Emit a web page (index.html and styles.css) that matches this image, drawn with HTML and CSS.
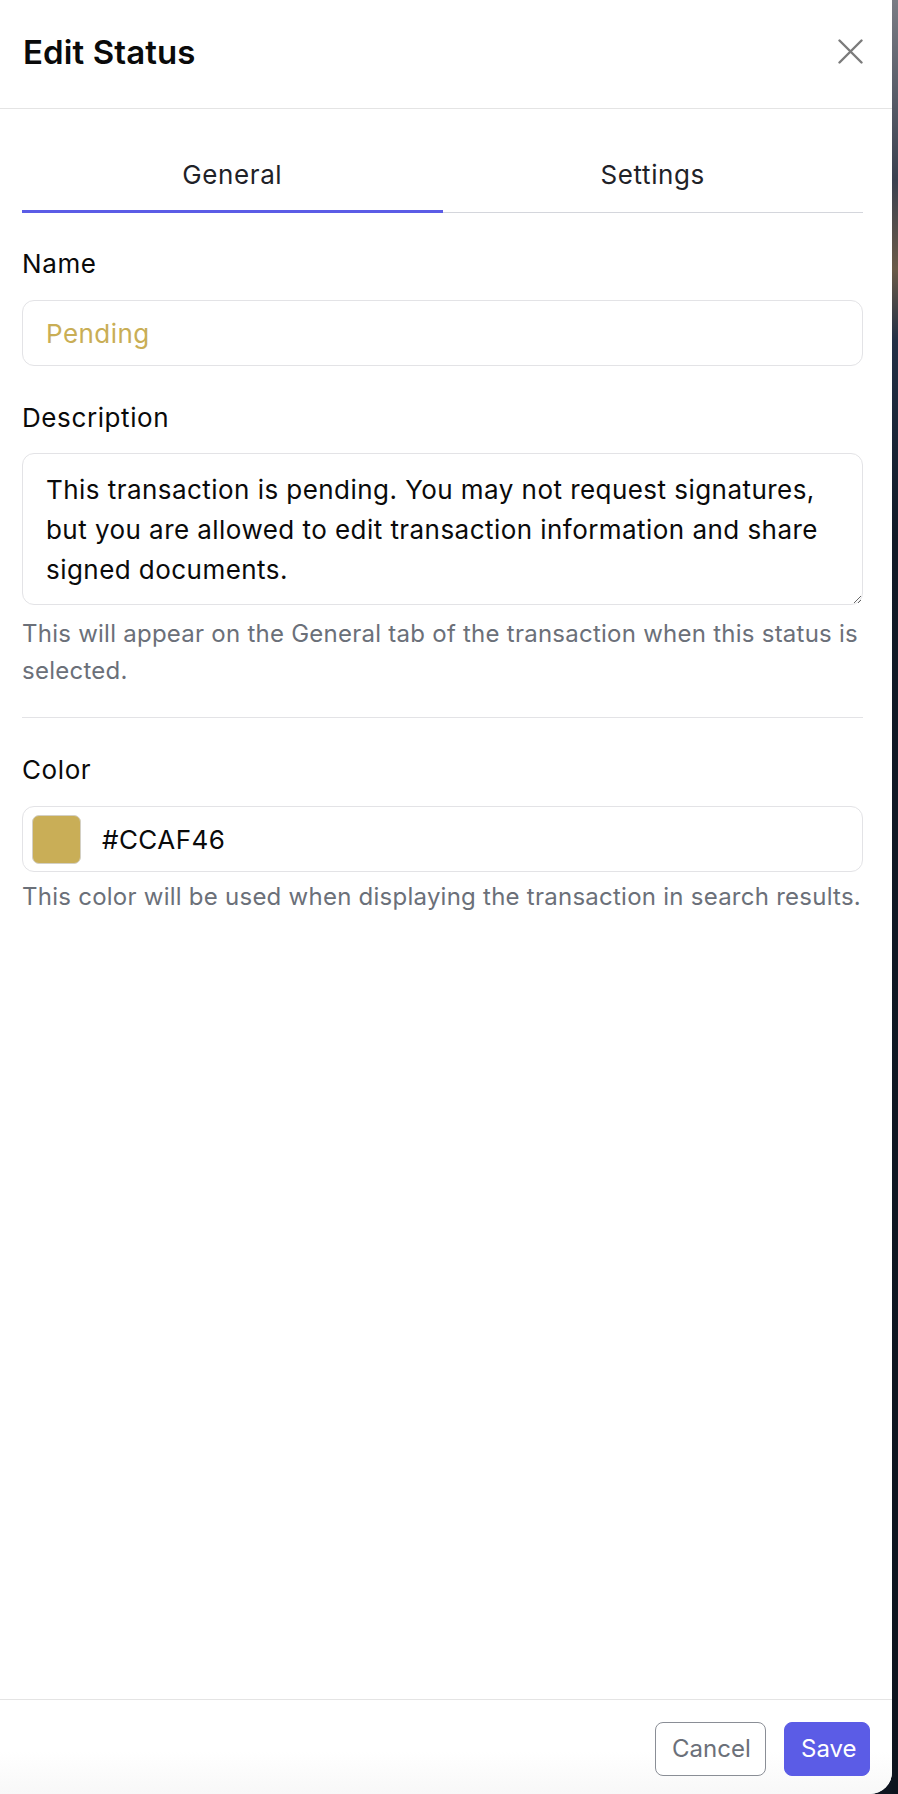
FILE: index.html
```html
<!DOCTYPE html>
<html lang="en">
<head>
<meta charset="utf-8">
<title>Edit Status</title>
<link rel="stylesheet" href="styles.css">
</head>
<body>
<div class="screen">
  <aside class="panel">
    <header class="panel-header">
      <h1 class="panel-title">Edit Status</h1>
      <button class="close-btn" aria-label="Close">
        <svg width="25" height="25" viewBox="0 0 25 25"><path d="M1.5 1.5 L23.5 23.5 M23.5 1.5 L1.5 23.5" stroke="#7b7b7b" stroke-width="2.4" stroke-linecap="round" fill="none"/></svg>
      </button>
    </header>
    <main class="panel-body">
      <nav class="tabs">
        <button class="tab tab-active">General</button>
        <button class="tab">Settings</button>
      </nav>

      <label class="field-label label-first">Name</label>
      <div class="text-input"><span class="name-value">Pending</span></div>

      <label class="field-label">Description</label>
      <textarea class="textarea">This transaction is pending. You may not request signatures, but you are allowed to edit transaction information and share signed documents.</textarea>
      <p class="help help-desc">This will appear on the General tab of the transaction when this status is selected.</p>

      <hr class="divider">

      <label class="field-label">Color</label>
      <div class="text-input color-input">
        <span class="swatch"></span>
        <span class="color-value">#CCAF46</span>
      </div>
      <p class="help help-color">This color will be used when displaying the transaction in search results.</p>
    </main>
    <footer class="panel-footer">
      <button class="btn btn-cancel">Cancel</button>
      <button class="btn btn-save">Save</button>
    </footer>
  </aside>
  <div class="edge"></div>
</div>
</body>
</html>
```
FILE: styles.css
```css
* { box-sizing: border-box; }
html, body { margin: 0; padding: 0; }
body {
  font-family: Inter, "Noto Sans", "Liberation Sans", sans-serif;
  background: #0e1520;
  color: #111;
}
.screen {
  display: flex;
  width: 898px;
  height: 1794px;
  overflow: hidden;
}
.panel {
  width: 892px;
  height: 1794px;
  background: #fff;
  border-bottom-right-radius: 22px;
  display: flex;
  flex-direction: column;
  flex: none;
}
.edge {
  flex: 1;
  background: linear-gradient(180deg, #7a7c84 0%, #3b4150 10%, #6a5a48 15%, #233046 19%, #111a27 30%, #0d141e 100%);
}
.panel-header {
  height: 109px;
  border-bottom: 1px solid #e4e4e4;
  display: flex;
  align-items: center;
  justify-content: space-between;
  padding: 0 29px 5px 23px;
}
.panel-title {
  margin: 0;
  font-size: 33px;
  line-height: 40px;
  font-weight: 600;
  color: #0a0a0a;
  letter-spacing: 0.1px;
}
.close-btn {
  border: 0;
  background: none;
  padding: 0;
  width: 25px;
  height: 25px;
  display: block;
}
.close-btn svg { display: block; }
.panel-body {
  padding: 0 29px 0 22px;
  display: flex;
  flex-direction: column;
}
.tabs {
  margin-top: 28px;
  display: grid;
  grid-template-columns: 1fr 1fr;
  border-bottom: 1px solid #d4d6dc;
}
.tab {
  font-family: inherit;
  border: 0;
  border-bottom: 3px solid transparent;
  margin-bottom: -1px;
  background: none;
  padding: 24px 0 21px;
  font-size: 26px;
  line-height: 28px;
  letter-spacing: 0.6px;
  color: #1f2228;
  text-align: center;
}
.tab-active { border-bottom-color: #5b5ce6; }
.field-label {
  display: block;
  margin-top: 36px;
  font-size: 26px;
  line-height: 32px;
  letter-spacing: 0.6px;
  color: #0a0a0a;
}
.label-first { margin-top: 35px; }
.text-input {
  margin-top: 20px;
  height: 66px;
  border: 1px solid #e3e3e6;
  border-radius: 12px;
  display: flex;
  align-items: center;
  padding: 0 23px;
  font-size: 26px;
  letter-spacing: 0.45px;
}
.name-value { color: #c9ae55; }
.textarea {
  display: block;
  margin-top: 19px;
  width: 100%;
  height: 152px;
  border: 1px solid #e3e3e6;
  border-radius: 12px;
  padding: 16px 23px 14px;
  font-family: inherit;
  font-size: 26px;
  line-height: 40px;
  letter-spacing: 0.45px;
  color: #0a0a0a;
  resize: vertical;
  overflow: hidden;
}
.help {
  margin: 0;
  font-size: 24px;
  line-height: 37px;
  letter-spacing: 0.25px;
  color: #6b7079;
}
.help-desc { margin-top: 10px; }
.help-color { margin-top: 6px; }
.divider {
  margin: 28px 0 0;
  border: 0;
  border-top: 1px solid #e3e3e6;
  height: 0;
}
.color-input {
  padding-left: 9px;
  gap: 21px;
}
.swatch {
  width: 49px;
  height: 49px;
  border-radius: 7px;
  background: #c9ae57;
  border: 1px solid #d4d0c4;
  flex: none;
}
.color-value { color: #0a0a0a; }
.panel-footer {
  margin-top: auto;
  height: 95px;
  border-top: 1px solid #e4e4e4;
  display: flex;
  justify-content: flex-end;
  align-items: flex-start;
  gap: 18px;
  padding: 22px 22px 0;
  background: linear-gradient(180deg, #ffffff 55%, #f8f8f8 100%);
  border-bottom-right-radius: 22px;
}
.btn {
  font-family: inherit;
  height: 54px;
  border-radius: 8px;
  font-size: 24px;
  line-height: 28px;
  padding: 0 16px;
}
.btn-cancel {
  width: 111px;
  background: #fff;
  border: 1px solid #8a8e96;
  color: #6b7079;
}
.btn-save {
  width: 86px;
  background: #5b5ce6;
  border: 1px solid #5b5ce6;
  color: #fff;
}
```
